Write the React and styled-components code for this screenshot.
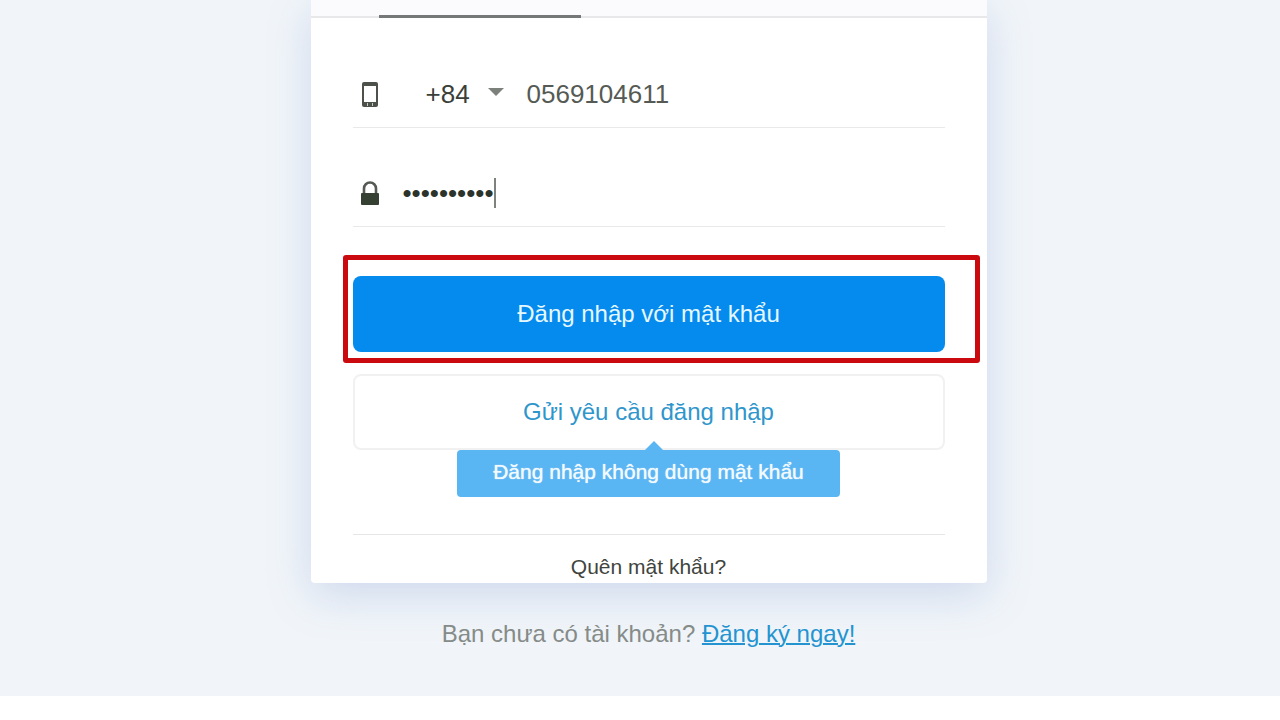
import React, { useState } from "react";
import styled, { createGlobalStyle } from "styled-components";

const GlobalStyle = createGlobalStyle`
  * {
    box-sizing: border-box;
  }
  body {
    margin: 0;
    background: #ffffff;
    font-family: "Liberation Sans", Arial, sans-serif;
    color: #3a4038;
  }
`;

const Page = styled.main`
  display: flex;
  flex-direction: column;
  align-items: center;
  padding: 0 0 48px 17px;
  background: #f1f5f9;
  overflow: hidden;
`;

const Card = styled.section`
  width: 100%;
  max-width: 676px;
  border-radius: 0 0 4px 4px;
  background: #ffffff;
  box-shadow: 0 12px 44px rgba(110, 140, 205, 0.26);
`;

const Tabs = styled.div`
  display: flex;
  height: 18px;
  padding: 0 68px;
  align-items: flex-end;
  background: #fbfbfd;
  border-bottom: 2px solid #e8e8ea;
`;

const ActiveTab = styled.div`
  flex: 0 1 202px;
  height: 3px;
  margin-bottom: -2px;
  background: #747876;
`;

const Form = styled.form`
  display: flex;
  flex-direction: column;
  padding: 11px 42px 0;
`;

const Field = styled.div`
  display: flex;
  align-items: center;
  padding: 50px 0 18px 7px;
  border-bottom: 1px solid #e9e9e9;
`;

const FieldIcon = styled.label`
  display: flex;
  justify-content: center;
  width: 20px;
  height: 30px;
  align-items: center;
  margin-right: ${(props) => props.$gap}px;
`;

const CountryCode = styled.div`
  display: flex;
  align-items: center;
  gap: 16px;
  margin-right: 23px;
`;

const CodeSelect = styled.select`
  appearance: none;
  width: 46px;
  height: 30px;
  padding: 0;
  border: none;
  background: none;
  color: #3a4038;
  font: 26px/30px "Liberation Sans", Arial, sans-serif;
  outline: none;
`;

const PhoneInput = styled.input`
  flex: 1;
  min-width: 0;
  height: 30px;
  padding: 0;
  border: none;
  background: none;
  color: #555a54;
  font: 26px/30px "Liberation Sans", Arial, sans-serif;
  outline: none;
`;

const PasswordInput = styled(PhoneInput)`
  flex: none;
  field-sizing: content;
  color: #2c332a;
`;

const Caret = styled.span`
  width: 2px;
  height: 30px;
  background: #7d827c;
`;

const Highlight = styled.div`
  position: relative;
  display: flex;
  margin-top: 49px;

  &::after {
    content: "";
    position: absolute;
    inset: -21px -35px -11px -10px;
    border: 5px solid #cb0a10;
    border-radius: 3px;
    pointer-events: none;
  }
`;

const Button = styled.button`
  width: 100%;
  height: 76px;
  padding: 0;
  border: ${(props) => (props.$primary ? "none" : "2px solid #f1f1f1")};
  border-radius: 8px;
  background: ${(props) => (props.$primary ? "#058bee" : "#ffffff")};
  color: ${(props) => (props.$primary ? "#e6f8ff" : "#2f96cc")};
  font: 24px/28px "Liberation Sans", Arial, sans-serif;
`;

const Request = styled.div`
  position: relative;
  display: flex;
  justify-content: center;
  margin-top: 22px;
`;

const Tooltip = styled.div`
  position: absolute;
  top: 100%;
  width: 383px;
  padding: 10px 0 13px;
  border-radius: 4px;
  background: #5ab5f3;
  color: #f2faff;
  font-size: 21px;
  line-height: 24px;
  text-align: center;
  text-shadow: 0 0 1px #f2faff;
  white-space: nowrap;

  &::before {
    content: "";
    position: absolute;
    left: 188px;
    bottom: 100%;
    border: 9px solid transparent;
    border-top-width: 0;
    border-bottom-color: #5ab5f3;
  }
`;

const Forgot = styled.div`
  margin-top: 84px;
  padding: 20px 0 4px;
  border-top: 1px solid #e6e6e6;
  text-align: center;
`;

const ForgotLink = styled.a`
  color: #3f453e;
  font-size: 21px;
  line-height: 24px;
  text-decoration: none;
`;

const SignUp = styled.p`
  margin: 37px 0 0;
  color: #858b88;
  font-size: 24px;
  line-height: 28px;
`;

const SignUpLink = styled.a`
  color: #2494d1;
  text-decoration: underline;
  text-decoration-thickness: 2px;
`;

const PhoneIcon = () => (
  <svg width="16" height="26" viewBox="0 0 16 26" aria-hidden="true">
    <rect x="0" y="1" width="16" height="25" rx="2" fill="#4c524a" />
    <rect x="2" y="5" width="12" height="16" fill="#ffffff" />
    <rect x="5" y="22" width="1" height="3" fill="#c8cac8" />
    <rect x="10" y="22" width="1" height="3" fill="#c8cac8" />
  </svg>
);

const LockIcon = () => (
  <svg width="20" height="24" viewBox="0 0 20 24" aria-hidden="true">
    <path
      d="M4 12V7.5a6 6 0 0 1 12 0V12"
      fill="none"
      stroke="#535a51"
      strokeWidth="2.6"
    />
    <rect x="1" y="12" width="18" height="12" rx="1" fill="#354033" />
  </svg>
);

const ArrowIcon = () => (
  <svg width="16" height="14" viewBox="0 0 16 14" aria-hidden="true">
    <path d="M0 1h16L8 9z" fill="#7c817b" />
  </svg>
);

const App = () => {
  const [code, setCode] = useState("+84");
  const [phone, setPhone] = useState("0569104611");
  const [password, setPassword] = useState("matkhau123");

  return (
    <>
      <GlobalStyle />
      <Page>
        <Card>
          <Tabs>
            <ActiveTab />
          </Tabs>
          <Form onSubmit={(e) => e.preventDefault()}>
            <Field>
              <FieldIcon htmlFor="phone" aria-label="Số điện thoại" $gap={46}>
                <PhoneIcon />
              </FieldIcon>
              <CountryCode>
                <CodeSelect
                  aria-label="Mã quốc gia"
                  value={code}
                  onChange={(e) => setCode(e.target.value)}
                >
                  <option value="+84">+84</option>
                </CodeSelect>
                <ArrowIcon />
              </CountryCode>
              <PhoneInput
                id="phone"
                type="tel"
                value={phone}
                onChange={(e) => setPhone(e.target.value)}
              />
            </Field>
            <Field>
              <FieldIcon htmlFor="password" aria-label="Mật khẩu" $gap={23}>
                <LockIcon />
              </FieldIcon>
              <PasswordInput
                id="password"
                type="password"
                value={password}
                onChange={(e) => setPassword(e.target.value)}
              />
              <Caret />
            </Field>
            <Highlight>
              <Button type="submit" $primary>
                Đăng nhập với mật khẩu
              </Button>
            </Highlight>
            <Request>
              <Button type="button">Gửi yêu cầu đăng nhập</Button>
              <Tooltip>Đăng nhập không dùng mật khẩu</Tooltip>
            </Request>
            <Forgot>
              <ForgotLink href="#forgot">Quên mật khẩu?</ForgotLink>
            </Forgot>
          </Form>
        </Card>
        <SignUp>
          Bạn chưa có tài khoản?{" "}
          <SignUpLink href="#signup">Đăng ký ngay!</SignUpLink>
        </SignUp>
      </Page>
    </>
  );
};

export default App;
